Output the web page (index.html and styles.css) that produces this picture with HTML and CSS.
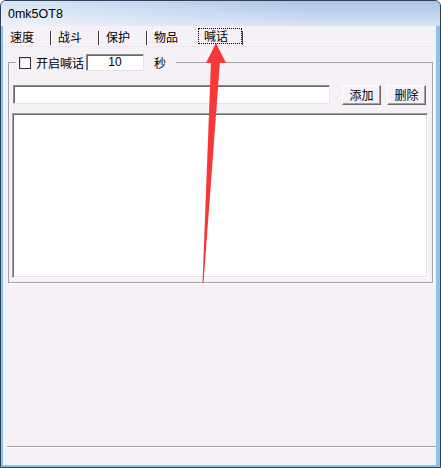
FILE: index.html
```html
<!DOCTYPE html>
<html>
<head>
<meta charset="utf-8">
<link rel="stylesheet" href="styles.css">
</head>
<body>
<div class="window">
  <div class="titlebar"><span class="title">0mk5OT8</span></div>
  <div class="client">
    <div class="tabs">
      <span class="tab">速度</span><span class="sep"></span>
      <span class="tab">战斗</span><span class="sep"></span>
      <span class="tab">保护</span><span class="sep"></span>
      <span class="tab">物品</span>
      <span class="tab active"><span class="focus">喊话</span></span><span class="sep"></span>
    </div>
    <fieldset class="group">
      <legend class="group-head">
        <span class="checkbox"></span>
        <span class="label">开启喊话</span>
        <span class="num">10</span>
        <span class="unit">秒</span>
      </legend>
      <div class="row">
        <div class="edit"></div>
        <button class="btn">添加</button>
        <button class="btn">删除</button>
      </div>
      <div class="list"></div>
    </fieldset>
    <div class="status"></div>
  </div>
  <svg class="arrow" width="441" height="468" viewBox="0 0 441 468">
    <polygon points="211,61 220,61 203.5,283 202.5,283" fill="#f63838"/>
    <polygon points="216,43 206,63 226,63" fill="#f63838"/>
  </svg>
</div>
</body>
</html>
```
FILE: styles.css
```css
html, body {
  margin: 0;
  padding: 0;
  background: #ffffff;
}
body {
  width: 441px;
  height: 468px;
  overflow: hidden;
  font-family: "Noto Sans CJK SC", "Liberation Sans", sans-serif;
  font-size: 12px;
  color: #000;
}
.window {
  position: relative;
  width: 441px;
  height: 468px;
  box-sizing: border-box;
  border: 1px solid #2e4156;
  border-radius: 6px 6px 0 0;
  background: #86c6ea;
  display: flex;
  flex-direction: column;
  overflow: hidden;
}
.titlebar {
  height: 25px;
  flex: none;
  background:
    linear-gradient(to right, rgba(255,255,255,0.55), rgba(255,255,255,0) 70%),
    linear-gradient(to bottom, #a9c5e8, #d6e4f4);
  display: flex;
  align-items: center;
  padding-left: 7px;
}
.title {
  font-family: "Liberation Sans", "Noto Sans", sans-serif;
  font-size: 12.5px;
  color: #000;
  margin-top: 1px;
}
.client {
  flex: none;
  height: 439px;
  margin: 0 4px 2px 2px;
  background: #f5f1f6;
  display: flex;
  flex-direction: column;
}
.tabs {
  height: 20px;
  flex: none;
  display: flex;
  align-items: center;
  padding-left: 1px;
  border-bottom: 1px solid #ece8ee;
}
.tab {
  width: 46px;
  height: 20px;
  box-sizing: border-box;
  padding-left: 6px;
  line-height: 20px;
  padding-top: 1px;
  display: flex;
  align-items: center;
}
.tab.active {
  width: 47px;
  padding-left: 3px;
  margin-left: 1px;
}
.focus {
  display: block;
  width: 46px;
  height: 16px;
  box-sizing: border-box;
  border: 1px dotted #000;
  padding-left: 5px;
  line-height: 14px;
  margin-top: -1px;
}
.sep {
  width: 0;
  height: 14px;
  border-left: 1px solid #3e3e3e;
  border-right: 1px solid #ffffff;
  margin-top: 4px;
}
.group {
  flex: none;
  margin: 7px 3px 0 5px;
  padding: 0 4px 4px 4px;
  border: 1px solid #a3a0a6;
  box-shadow: 1px 1px 0 #ffffff;
  min-width: 0;
}
.group-head {
  display: flex;
  align-items: center;
  margin-left: 3px;
  padding: 0 10px 0 3px;
  height: 17px;
}
.checkbox {
  width: 12px;
  height: 12px;
  box-sizing: border-box;
  border: 1px solid #333333;
  background: #ffffff;
  box-shadow: inset 1px 1px 0 #dcdcdc;
}
.label {
  margin-left: 5px;
  line-height: 17px;
}
.num {
  margin-left: 2px;
  width: 58px;
  height: 17px;
  box-sizing: border-box;
  background: #ffffff;
  border-top: 1px solid #8a8a8a;
  border-left: 1px solid #8a8a8a;
  border-right: 1px solid #e6e3e8;
  border-bottom: 1px solid #e6e3e8;
  box-shadow: inset 1px 1px 0 #6b6b6b;
  text-align: center;
  line-height: 15px;
  font-family: "Liberation Sans", sans-serif;
  font-size: 12px;
}
.unit {
  margin-left: 10px;
  line-height: 17px;
}
.row {
  display: flex;
  align-items: flex-start;
  margin-top: 14px;
}
.edit {
  width: 317px;
  height: 19px;
  box-sizing: border-box;
  background: #ffffff;
  border-top: 1px solid #8a8a8a;
  border-left: 1px solid #8a8a8a;
  border-right: 1px solid #e6e3e8;
  border-bottom: 1px solid #e6e3e8;
  box-shadow: inset 1px 1px 0 #6b6b6b;
}
.btn {
  width: 39px;
  height: 20px;
  box-sizing: border-box;
  margin: 0 0 0 6px;
  padding: 0;
  background: #f5f1f6;
  border-top: 1px solid #ffffff;
  border-left: 1px solid #ffffff;
  border-right: 1px solid #696969;
  border-bottom: 1px solid #696969;
  box-shadow: inset -1px -1px 0 #a0a0a0;
  font-family: "Noto Sans CJK SC", sans-serif;
  font-size: 12px;
  line-height: 18px;
  color: #000;
}
.edit + .btn {
  margin-left: 12px;
}
.list {
  width: 416px;
  height: 165px;
  box-sizing: border-box;
  margin: 8px 0 0 -1px;
  background: #ffffff;
  border-top: 1px solid #a0a0a0;
  border-left: 1px solid #a0a0a0;
  border-right: 1px solid #ffffff;
  border-bottom: 1px solid #ffffff;
  box-shadow: inset 1px 1px 0 #696969, inset -1px -1px 0 #e3e3e3;
}
.status {
  margin: auto 0 17px 4px;
  height: 0;
  border-top: 1px solid #a09ca3;
  border-bottom: 1px solid #ffffff;
}
.arrow {
  position: absolute;
  left: -1px;
  top: -1px;
  pointer-events: none;
}
```
